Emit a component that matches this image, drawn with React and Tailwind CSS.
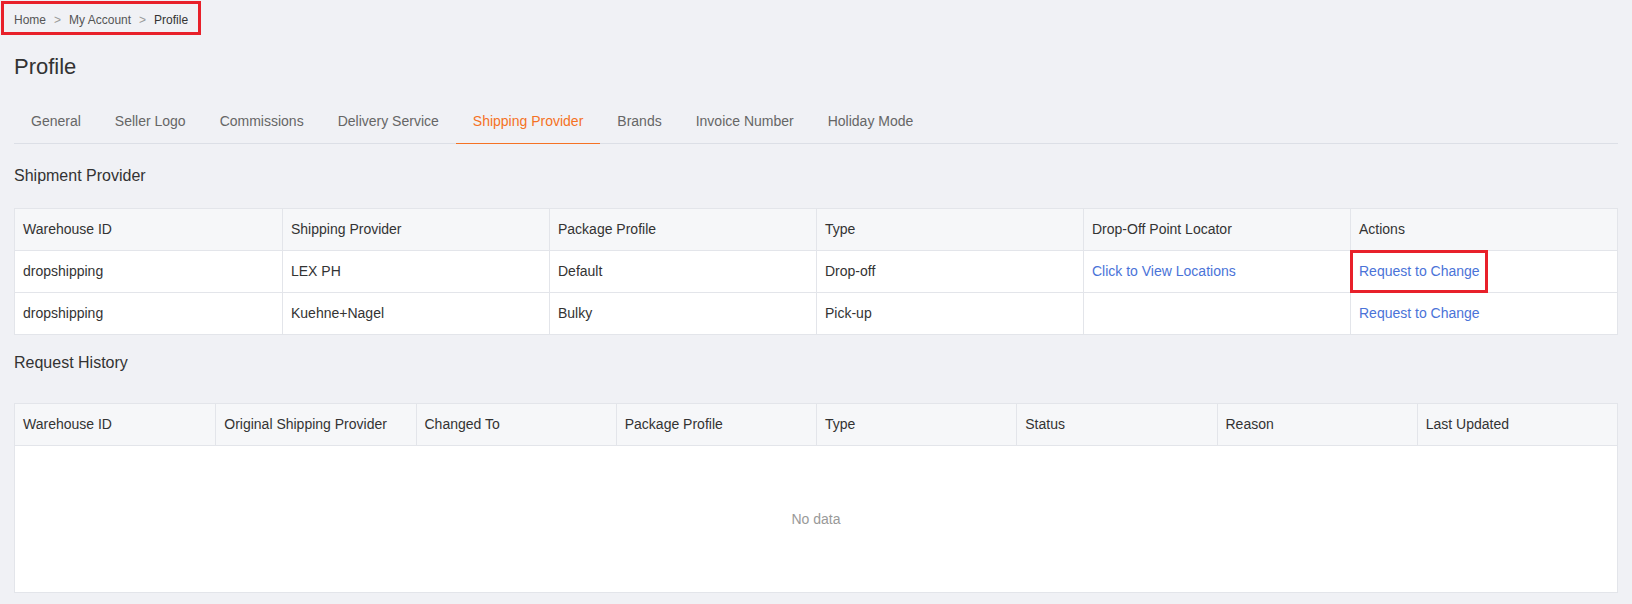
const tabs = [
  'General',
  'Seller Logo',
  'Commissions',
  'Delivery Service',
  'Shipping Provider',
  'Brands',
  'Invoice Number',
  'Holiday Mode',
]

const providerColumns = [
  'Warehouse ID',
  'Shipping Provider',
  'Package Profile',
  'Type',
  'Drop-Off Point Locator',
  'Actions',
]

const providers = [
  { warehouse: 'dropshipping', provider: 'LEX PH', profile: 'Default', type: 'Drop-off', locator: true },
  { warehouse: 'dropshipping', provider: 'Kuehne+Nagel', profile: 'Bulky', type: 'Pick-up', locator: false },
]

const historyColumns = [
  'Warehouse ID',
  'Original Shipping Provider',
  'Changed To',
  'Package Profile',
  'Type',
  'Status',
  'Reason',
  'Last Updated',
]

function Breadcrumb() {
  return (
    <div className="pl-px pt-px">
      <div className="inline-flex items-center h-[34px] pt-[3px] px-[10px] border-[3px] border-[#e8202a] text-[12px]">
        <span className="text-[#555]">Home</span>
        <span className="mx-2 text-[#999]">&gt;</span>
        <span className="text-[#555]">My Account</span>
        <span className="mx-2 text-[#999]">&gt;</span>
        <span className="text-[#333]">Profile</span>
      </div>
    </div>
  )
}

function Tabs({ active }) {
  return (
    <div className="flex mt-[17px] border-b border-[#dcdfe6]">
      {tabs.map((t) => (
        <div
          key={t}
          className={`h-[45px] -mb-px px-[17px] flex items-center text-[14px] border-b cursor-pointer ${
            t === active ? 'text-[#f57224] border-[#f57224]' : 'text-[#666] border-transparent'
          }`}
        >
          {t}
        </div>
      ))}
    </div>
  )
}

function ProviderTable() {
  return (
    <div className="mt-[20px] border border-[#e3e5ea] bg-white text-[14px] text-[#333]">
      <div className="grid grid-cols-6 bg-[#f6f7f9]">
        {providerColumns.map((c, i) => (
          <div key={c} className={`h-[41px] px-2 flex items-center ${i > 0 ? 'border-l border-[#e3e5ea]' : ''}`}>
            {c}
          </div>
        ))}
      </div>
      {providers.map((row, r) => (
        <div key={r} className="grid grid-cols-6 border-t border-[#e3e5ea]">
          <div className="h-[41px] px-2 flex items-center">{row.warehouse}</div>
          <div className="h-[41px] px-2 flex items-center border-l border-[#e3e5ea]">{row.provider}</div>
          <div className="h-[41px] px-2 flex items-center border-l border-[#e3e5ea]">{row.profile}</div>
          <div className="h-[41px] px-2 flex items-center border-l border-[#e3e5ea]">{row.type}</div>
          <div className="h-[41px] px-2 flex items-center border-l border-[#e3e5ea]">
            {row.locator && <a className="text-[#4a73d8] cursor-pointer">Click to View Locations</a>}
          </div>
          <div className="relative h-[41px] px-2 flex items-center border-l border-[#e3e5ea]">
            <a className="text-[#4a73d8] cursor-pointer">Request to Change</a>
            {r === 0 && (
              <span className="absolute -left-px -top-px w-[138px] h-[43px] border-[3px] border-[#e8202a] pointer-events-none" />
            )}
          </div>
        </div>
      ))}
    </div>
  )
}

function HistoryTable() {
  return (
    <div className="mt-[28px] border border-[#e3e5ea] bg-white text-[14px] text-[#333]">
      <div className="grid grid-cols-8 bg-[#f6f7f9]">
        {historyColumns.map((c, i) => (
          <div key={c} className={`h-[41px] px-2 flex items-center ${i > 0 ? 'border-l border-[#e3e5ea]' : ''}`}>
            {c}
          </div>
        ))}
      </div>
      <div className="h-[147px] border-t border-[#e3e5ea] flex items-center justify-center text-[#999]">
        No data
      </div>
    </div>
  )
}

export default function App() {
  return (
    <div className="min-h-[604px] bg-[#f0f1f5] font-['Liberation_Sans',Arial,sans-serif]">
      <Breadcrumb />
      <div className="px-[14px]">
        <h1 className="mt-[17px] text-[22px] leading-[30px] text-[#333] font-normal">Profile</h1>
        <Tabs active="Shipping Provider" />

        <h2 className="mt-[20px] text-[16px] leading-[24px] text-[#333] font-normal">Shipment Provider</h2>
        <ProviderTable />

        <h2 className="mt-[16px] text-[16px] leading-[24px] text-[#333] font-normal">Request History</h2>
        <HistoryTable />
      </div>
    </div>
  )
}
